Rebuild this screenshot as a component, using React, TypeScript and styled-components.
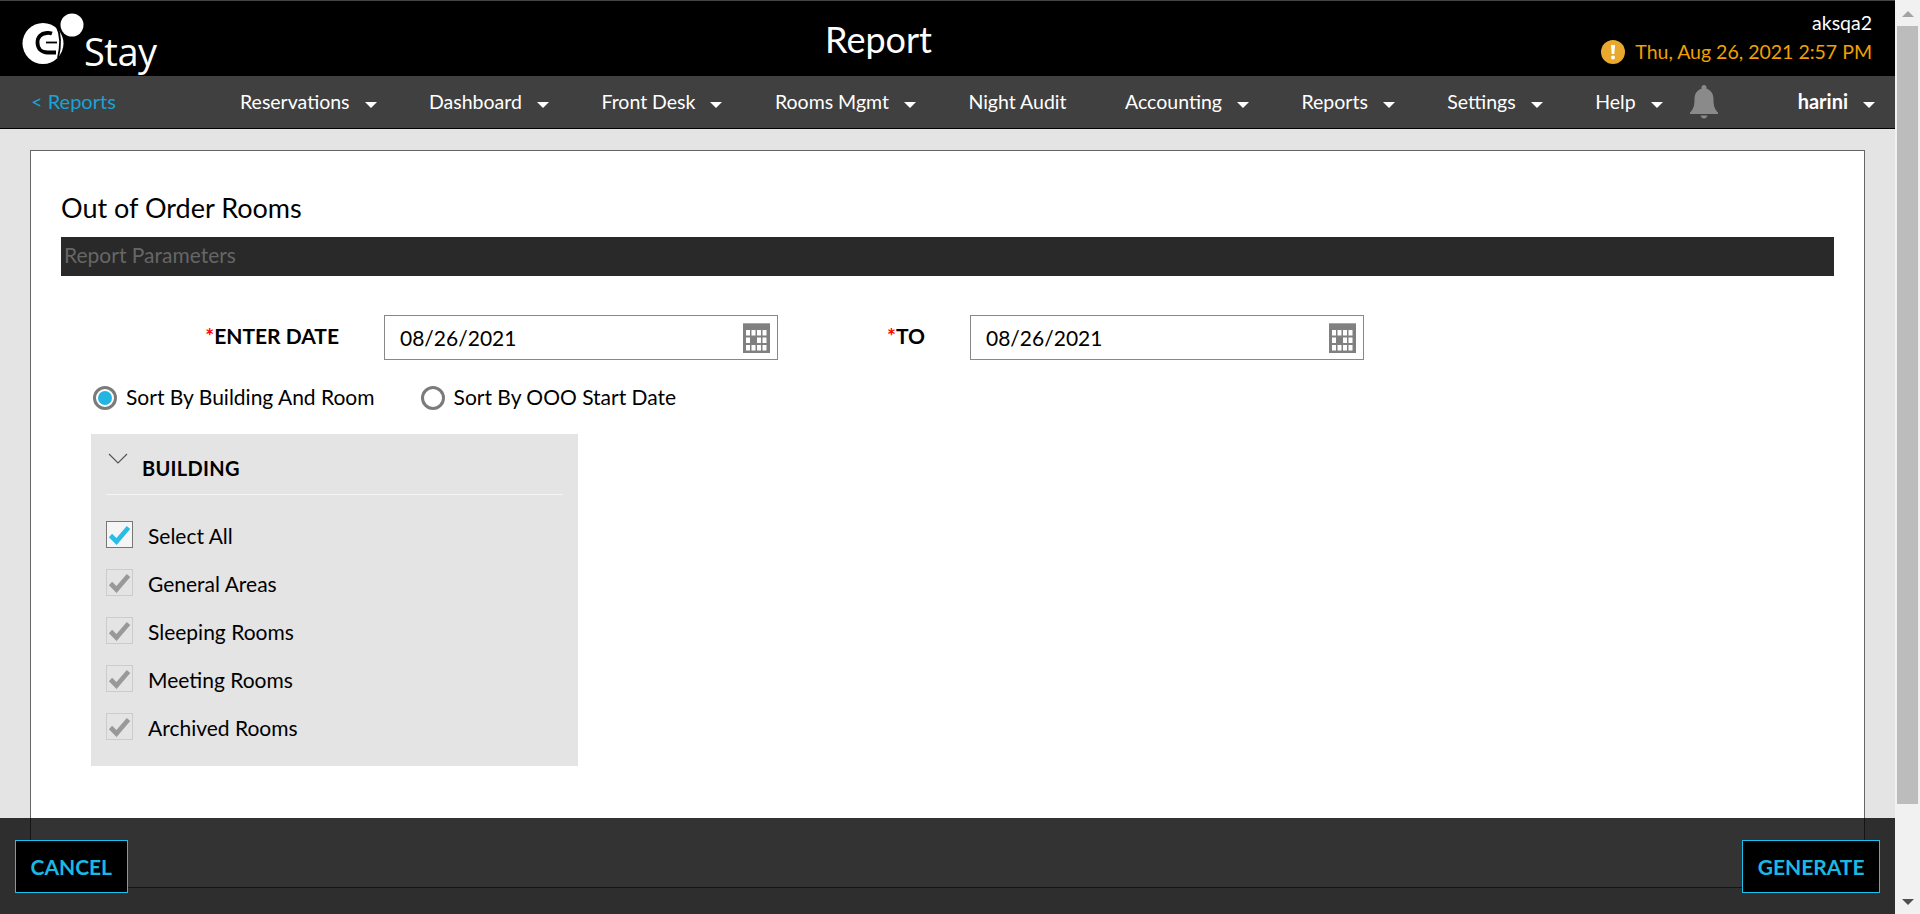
import React from 'react';
import styled, { createGlobalStyle } from 'styled-components';

const GlobalStyle = createGlobalStyle`
  html, body {
    margin: 0;
    padding: 0;
    height: 100%;
    overflow: hidden;
    font-family: Lato, "Liberation Sans", sans-serif;
  }
  * {
    box-sizing: border-box;
  }
`;

const Page = styled.div`
  display: flex;
  height: 100vh;
  background: #e4e4e4;
  color: #000;
`;

const Main = styled.div`
  position: relative;
  flex: 1;
  display: flex;
  flex-direction: column;
  min-width: 0;
`;

const Header = styled.header`
  height: 76px;
  flex: none;
  display: flex;
  background: #000;
  border-top: 1px solid #444;
  color: #fff;
`;

const Logo = styled.div`
  width: 825px;
  flex: none;
  display: flex;
  align-items: flex-start;
  padding: 12px 0 0 22px;
`;

const LogoWord = styled.span`
  margin: 15px 0 0 0;
  font-family: "Open Sans", sans-serif;
  font-size: 38px;
  line-height: 46px;
  letter-spacing: -0.5px;
`;

const PageTitle = styled.h1`
  margin: 16px 0 0;
  font-size: 36px;
  font-weight: 400;
  line-height: 44px;
`;

const Status = styled.div`
  margin-left: auto;
  padding: 11px 23px 0 0;
  display: flex;
  flex-direction: column;
  align-items: flex-end;
  gap: 6px;
  font-size: 19.5px;
  line-height: 22px;
`;

const StatusDate = styled.div`
  display: flex;
  align-items: center;
  gap: 10px;
  color: #f0a000;
  font-size: 19.5px;
`;

const Nav = styled.nav`
  height: 53px;
  flex: none;
  display: flex;
  align-items: center;
  background: #404040;
  border-bottom: 1px solid #000;
  padding: 0 20px 2px 31px;
  color: #fff;
  font-size: 19.5px;
`;

const BackLink = styled.a`
  width: 209px;
  flex: none;
  color: #19a3d6;
  font-size: 20px;
`;

const NavList = styled.div`
  display: flex;
  align-items: center;
  gap: 52.5px;
`;

const NavItem = styled.span<{ $plain?: boolean; $bold?: boolean }>`
  display: flex;
  align-items: center;
  gap: 15px;
  font-size: ${({ $bold }) => ($bold ? '20px' : 'inherit')};
  font-weight: ${({ $bold }) => ($bold ? 700 : 400)};
  margin-right: ${({ $plain }) => ($plain ? '6px' : '0')};
`;

const Caret = styled.i`
  width: 0;
  height: 0;
  margin-top: 7px;
  border-left: 6px solid transparent;
  border-right: 6px solid transparent;
  border-top: 6px solid #fff;
`;

const BellWrap = styled.span`
  display: flex;
  margin: 2px 0 0 -25px;
`;

const UserMenu = styled.div`
  margin-left: auto;
`;

const Card = styled.main`
  flex: 1;
  margin: 21px 30px 26px;
  padding: 42px 30px 0;
  background: #fff;
  border: 1px solid #666;
`;

const CardTitle = styled.h2`
  margin: 0 0 14px;
  font-size: 27px;
  font-weight: 400;
  line-height: 30px;
`;

const SectionBar = styled.div`
  height: 39px;
  padding-left: 3px;
  background: #292929;
  color: #666;
  font-size: 21px;
  line-height: 36px;
`;

const DateRow = styled.div`
  display: flex;
  align-items: center;
  margin-top: 39px;
`;

const FieldLabel = styled.label<{ $width: number }>`
  width: ${({ $width }) => $width}px;
  flex: none;
  margin-right: 45px;
  padding-bottom: 4px;
  text-align: right;
  font-size: 21px;
  font-weight: 700;
`;

const Required = styled.span`
  color: #f00;
`;

const DateBox = styled.div`
  width: 394px;
  height: 45px;
  flex: none;
  display: flex;
  align-items: center;
  justify-content: space-between;
  padding: 0 7px 0 15px;
  background: #fff;
  border: 1px solid #888;
  font-size: 21px;
`;

const DateValue = styled.span`
  padding-bottom: 1px;
`;

const RadioRow = styled.div`
  display: flex;
  gap: 46px;
  margin-top: 26px;
  padding-left: 32px;
`;

const RadioOption = styled.label`
  display: flex;
  align-items: center;
  gap: 9px;
  height: 23px;
  font-size: 21px;
`;

const RadioText = styled.span`
  padding-bottom: 3px;
`;

const RadioMark = styled.span<{ $on?: boolean }>`
  width: 24px;
  height: 24px;
  border: 3px solid #7b7b7b;
  border-radius: 50%;
  background: #fff;
  display: flex;
  align-items: center;
  justify-content: center;
  &::after {
    content: '';
    width: 14px;
    height: 14px;
    border-radius: 50%;
    background: ${({ $on }) => ($on ? '#22b5e2' : 'transparent')};
  }
`;

const Panel = styled.section`
  width: 487px;
  margin: 25px 0 0 30px;
  padding: 0 15px 26px;
  background: #e4e4e4;
`;

const PanelHead = styled.div`
  height: 61px;
  display: flex;
  align-items: flex-start;
  gap: 14px;
  padding: 19px 0 0 2px;
  border-bottom: 1px solid #f4f4f4;
`;

const PanelTitle = styled.span`
  font-size: 20px;
  font-weight: 700;
  letter-spacing: 0.3px;
  line-height: 30px;
`;

const CheckList = styled.div`
  display: flex;
  flex-direction: column;
  gap: 21px;
  padding-top: 26px;
`;

const CheckRow = styled.label`
  display: flex;
  align-items: center;
  gap: 15px;
  height: 27px;
  font-size: 21px;
`;

const CheckText = styled.span`
  padding-top: 2px;
`;

const CheckBox = styled.span<{ $active?: boolean }>`
  width: 27px;
  height: 27px;
  flex: none;
  display: flex;
  align-items: center;
  justify-content: center;
  background: ${({ $active }) => ($active ? '#f5f5f5' : '#e4e4e4')};
  border: 1px solid ${({ $active }) => ($active ? '#777' : '#ccc')};
  color: ${({ $active }) => ($active ? '#2bbce6' : '#999')};
`;

const Footer = styled.footer`
  position: absolute;
  left: 0;
  right: 0;
  bottom: 0;
  height: 96px;
  display: flex;
  justify-content: space-between;
  align-items: flex-start;
  padding: 22px 15px 0;
  background: rgba(0, 0, 0, 0.8);
`;

const ActionButton = styled.button`
  height: 53px;
  padding: 0 14.5px;
  background: #000;
  border: 1px solid #1cc0ec;
  color: #1cb8e4;
  font-family: inherit;
  font-size: 21px;
  font-weight: 700;
`;

const Scrollbar = styled.div`
  width: 25px;
  flex: none;
  display: flex;
  flex-direction: column;
  align-items: center;
  background: #f1f1f1;
`;

const ScrollUp = styled.i`
  margin-top: 11px;
  border-left: 6px solid transparent;
  border-right: 6px solid transparent;
  border-bottom: 6px solid #a3a3a3;
`;

const ScrollThumb = styled.div`
  width: 21px;
  height: 778px;
  margin-top: 9px;
  background: #bcbcbc;
`;

const ScrollDown = styled.i`
  margin-top: 95px;
  border-left: 6px solid transparent;
  border-right: 6px solid transparent;
  border-top: 6px solid #505050;
`;

const LogoMark = () => (
  <svg width="62" height="54" viewBox="0 0 62 54">
    <circle cx="21" cy="30.500" r="20.500" fill="#fff" />
    <circle cx="50" cy="12" r="11.500" fill="#fff" />
    <path
      d="M30 20.500c-1.500-.5-3.500-.8-5.500-.5-5.500.5-9 4-9 9.500 0 6.500 4.500 10 10 10h8.500"
      fill="none"
      stroke="#000"
      strokeWidth="3.800"
    />
    <path d="M24 29.500h11" stroke="#000" strokeWidth="1.800" />
    <path d="M35 14c3.500 7 3.800 19 1 31" fill="none" stroke="#000" strokeWidth="1.800" />
  </svg>
);

const AlertIcon = () => (
  <svg width="24" height="24" viewBox="0 0 24 24">
    <circle cx="12" cy="12" r="12" fill="#e8a92e" />
    <path d="M10 5h4l-.7 9h-2.600z" fill="#fff" />
    <circle cx="12" cy="17.500" r="2" fill="#fff" />
  </svg>
);

const BellIcon = () => (
  <svg width="28" height="34" viewBox="0 0 28 34">
    <path
      d="M14 0c1.500 0 2.500 1 2.500 2.500v1.300C21 5 23.500 9 23.500 14c0 6 .8 10 4.500 13.500V29H0v-1.500C3.700 24 4.500 20 4.500 14c0-5 2.500-9 7-10.200V2.500C11.500 1 12.500 0 14 0z"
      fill="#8a8a8a"
    />
    <path d="M10.500 30.500h7c-.5 2-1.800 3-3.500 3s-3-1-3.500-3z" fill="#8a8a8a" />
  </svg>
);

const CalendarIcon = () => {
  const cells = [];
  for (let row = 0; row < 3; row++) {
    for (let col = 0; col < 4; col++) {
      if (!(row === 1 && col === 1)) {
        cells.push(
          <rect key={`${row}-${col}`} x={3 + col * 5.500} y={7 + row * 7.500} width="4" height="5.500" fill="#fff" />
        );
      }
    }
  }
  return (
    <svg width="27" height="30" viewBox="0 0 27 30">
      <rect width="27" height="30" fill="#808080" />
      <rect width="27" height="1" fill="#a8a8a8" />
      {cells}
    </svg>
  );
};

const ChevronIcon = () => (
  <svg width="20" height="12" viewBox="0 0 20 12">
    <path d="M1 1l9 9 9-9" fill="none" stroke="#555" strokeWidth="1.200" />
  </svg>
);

const CheckIcon = () => (
  <svg width="23" height="20" viewBox="0 0 23 20">
    <path d="M2.500 10.500l6 6L20.500 2.500" fill="none" stroke="currentColor" strokeWidth="4.600" />
  </svg>
);

const menuItems = [
  { label: 'Reservations' },
  { label: 'Dashboard' },
  { label: 'Front Desk' },
  { label: 'Rooms Mgmt' },
  { label: 'Night Audit', plain: true },
  { label: 'Accounting' },
  { label: 'Reports' },
  { label: 'Settings' },
  { label: 'Help' },
];

const buildings = ['General Areas', 'Sleeping Rooms', 'Meeting Rooms', 'Archived Rooms'];

export default function App() {
  return (
    <Page>
      <GlobalStyle />
      <Main>
        <Header>
          <Logo>
            <LogoMark />
            <LogoWord>Stay</LogoWord>
          </Logo>
          <PageTitle>Report</PageTitle>
          <Status>
            <span>aksqa2</span>
            <StatusDate>
              <AlertIcon />
              Thu, Aug 26, 2021 2:57 PM
            </StatusDate>
          </Status>
        </Header>

        <Nav>
          <BackLink>&lt; Reports</BackLink>
          <NavList>
            {menuItems.map((item) => (
              <NavItem key={item.label} $plain={item.plain}>
                {item.label}
                {!item.plain && <Caret />}
              </NavItem>
            ))}
            <BellWrap>
              <BellIcon />
            </BellWrap>
          </NavList>
          <UserMenu>
            <NavItem $bold>
              harini
              <Caret />
            </NavItem>
          </UserMenu>
        </Nav>

        <Card>
          <CardTitle>Out of Order Rooms</CardTitle>
          <SectionBar>Report Parameters</SectionBar>

          <DateRow>
            <FieldLabel $width={278}>
              <Required>*</Required>ENTER DATE
            </FieldLabel>
            <DateBox>
              <DateValue>08/26/2021</DateValue>
              <CalendarIcon />
            </DateBox>
            <FieldLabel $width={147}>
              <Required>*</Required>TO
            </FieldLabel>
            <DateBox>
              <DateValue>08/26/2021</DateValue>
              <CalendarIcon />
            </DateBox>
          </DateRow>

          <RadioRow>
            <RadioOption>
              <RadioMark $on />
              <RadioText>Sort By Building And Room</RadioText>
            </RadioOption>
            <RadioOption>
              <RadioMark />
              <RadioText>Sort By OOO Start Date</RadioText>
            </RadioOption>
          </RadioRow>

          <Panel>
            <PanelHead>
              <ChevronIcon />
              <PanelTitle>BUILDING</PanelTitle>
            </PanelHead>
            <CheckList>
              <CheckRow>
                <CheckBox $active>
                  <CheckIcon />
                </CheckBox>
                <CheckText>Select All</CheckText>
              </CheckRow>
              {buildings.map((name) => (
                <CheckRow key={name}>
                  <CheckBox>
                    <CheckIcon />
                  </CheckBox>
                  <CheckText>{name}</CheckText>
                </CheckRow>
              ))}
            </CheckList>
          </Panel>
        </Card>

        <Footer>
          <ActionButton>CANCEL</ActionButton>
          <ActionButton>GENERATE</ActionButton>
        </Footer>
      </Main>

      <Scrollbar>
        <ScrollUp />
        <ScrollThumb />
        <ScrollDown />
      </Scrollbar>
    </Page>
  );
}
